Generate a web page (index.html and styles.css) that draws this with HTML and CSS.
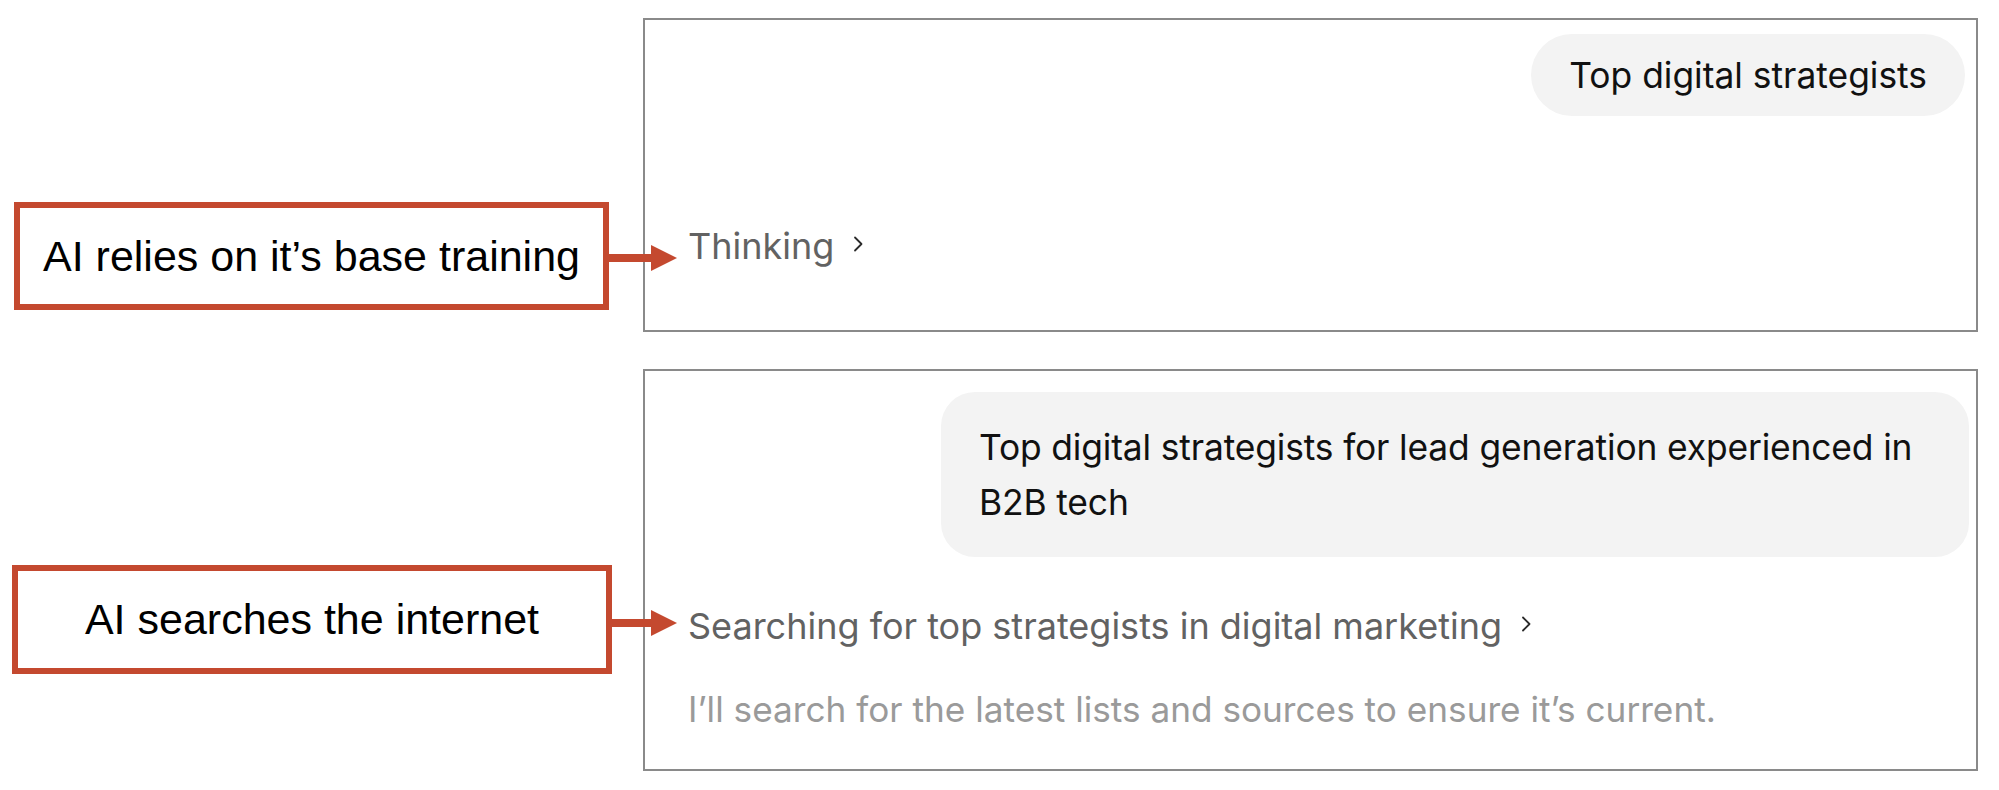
FILE: index.html
```html
<!DOCTYPE html>
<html lang="en">
<head>
<meta charset="utf-8">
<title>AI search vs base training</title>
<link rel="stylesheet" href="styles.css">
</head>
<body>
<main class="page">
  <section class="row row-first">
    <div class="note note-first">
      <div class="note-box">AI relies on it’s base training</div>
      <svg class="arrow" width="68" height="28" viewBox="0 0 68 28" aria-hidden="true">
        <rect x="0" y="10" width="43" height="8" fill="#c4492f"/>
        <polygon points="42,1 68,14 42,27" fill="#c4492f"/>
      </svg>
    </div>
    <div class="panel panel-first">
      <div class="bubble bubble-pill">Top digital strategists</div>
      <div class="status status-thinking">Thinking<svg class="chevron" width="12" height="20" viewBox="0 0 12 20" aria-hidden="true"><polyline points="3,3.5 9.5,10 3,16.5" fill="none" stroke="#2a2a2a" stroke-width="1.8" stroke-linecap="round" stroke-linejoin="round"/></svg></div>
    </div>
  </section>

  <section class="row row-second">
    <div class="note note-second">
      <div class="note-box">AI searches the internet</div>
      <svg class="arrow" width="65" height="28" viewBox="0 0 65 28" aria-hidden="true">
        <rect x="0" y="10" width="40" height="8" fill="#c4492f"/>
        <polygon points="39,1 65,14 39,27" fill="#c4492f"/>
      </svg>
    </div>
    <div class="panel panel-second">
      <div class="bubble bubble-wide">Top digital strategists for lead generation experienced in<br>B2B tech</div>
      <div class="status status-search">Searching for top strategists in digital marketing<svg class="chevron" width="12" height="20" viewBox="0 0 12 20" aria-hidden="true"><polyline points="3,3.5 9.5,10 3,16.5" fill="none" stroke="#2a2a2a" stroke-width="1.8" stroke-linecap="round" stroke-linejoin="round"/></svg></div>
      <div class="status status-note">I’ll search for the latest lists and sources to ensure it’s current.</div>
    </div>
  </section>
</main>
</body>
</html>
```

FILE: styles.css
```css
* {
  box-sizing: border-box;
}

html, body {
  margin: 0;
  padding: 0;
  background: #ffffff;
}

.page {
  width: 1999px;
  padding: 18px 21px 0 0;
  display: flex;
  flex-direction: column;
  gap: 37px;
  font-family: Inter, "Noto Sans", sans-serif;
}

.row {
  display: flex;
  align-items: flex-start;
}

.note {
  display: flex;
  align-items: center;
  position: relative;
  z-index: 1;
}

.note-first {
  padding-left: 14px;
  margin-top: 184px;
  margin-right: -34px;
}

.note-second {
  padding-left: 12px;
  margin-top: 196px;
  margin-right: -34px;
}

.note-box {
  height: 108px;
  border: 6px solid #c4492f;
  display: flex;
  align-items: center;
  justify-content: center;
  font-family: "Liberation Sans", Arial, sans-serif;
  font-size: 43px;
  color: #000000;
  white-space: nowrap;
}

.note-first .note-box {
  width: 595px;
}

.note-second .note-box {
  width: 600px;
  height: 109px;
}

.arrow {
  display: block;
  flex: none;
}

.note-first .arrow {
  margin-top: 4px;
}

.note-second .arrow {
  margin-top: 7px;
}

.panel {
  flex: 1;
  border: 2px solid #8a8a8a;
  display: flex;
  flex-direction: column;
  padding-left: 43px;
}

.panel-first {
  padding-top: 14px;
  padding-right: 11px;
  padding-bottom: 62px;
}

.panel-second {
  padding-top: 21px;
  padding-right: 7px;
  padding-bottom: 38px;
}

.bubble {
  align-self: flex-end;
  background: #f3f3f3;
  color: #111111;
  font-size: 35.4px;
  line-height: 55px;
  white-space: nowrap;
}

.bubble-pill {
  padding: 14px 38px 13px;
  border-radius: 41px;
}

.bubble-wide {
  width: 1028px;
  padding: 28px 38px 27px;
  border-radius: 34px;
  letter-spacing: -0.15px;
}

.status {
  font-size: 36px;
  line-height: 44px;
  white-space: nowrap;
  display: flex;
  align-items: center;
}

.status-thinking {
  color: #626262;
  margin-top: 108px;
}

.status-search {
  color: #626262;
  margin-top: 47px;
}

.status-note {
  color: #9a9a9a;
  font-size: 35.2px;
  margin-top: 39px;
}

.chevron {
  display: block;
  flex: none;
  margin-left: 18px;
  margin-top: -4px;
}
```
